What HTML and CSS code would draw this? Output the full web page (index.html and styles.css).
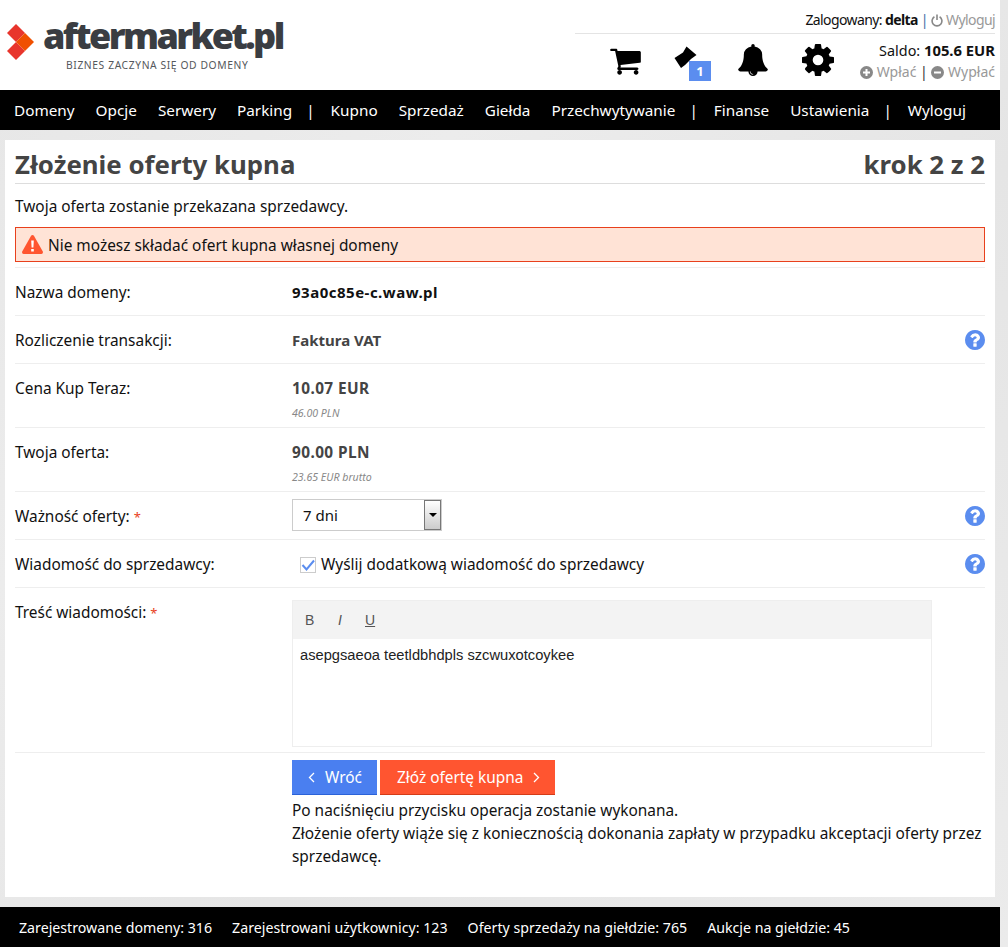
FILE: index.html
```html
<!DOCTYPE html>
<html lang="pl">
<head>
    <meta charset="UTF-8">
    <title>Złożenie oferty kupna</title>
    <link rel="stylesheet" href="styles.css">
</head>
<body>

<svg class="defs" width="0" height="0">
  <symbol id="ico-help" viewBox="128 128 1536 1536">
    <path fill="#5b8def" d="M1024 1376v-192q0-14-9-23t-23-9h-192q-14 0-23 9t-9 23v192q0 14 9 23t23 9h192q14 0 23-9t9-23zm256-672q0-88-55.500-163t-138.500-116-170-41q-243 0-371 213-15 24 8 42l132 100q7 6 19 6 16 0 25-12 53-68 86-92 34-24 86-24 48 0 85.500 26t37.500 59q0 38-20 61t-68 45q-63 28-115.500 86.500t-52.500 125.500v36q0 14 9 23t23 9h192q14 0 23-9t9-23q0-19 21.500-49.500t54.500-49.500q32-18 49-28.500t46-35 44.500-48 28-60.500 12.500-81zm384 192q0 209-103 385.500t-279.500 279.500-385.500 103-385.500-103-279.500-279.500-103-385.500 103-385.500 279.500-279.500 385.500-103 385.500 103 279.500 279.500 103 385.500z"/>
  </symbol>
</svg>

<header class="top">
  <div class="logo">
    <svg class="logo-mark" width="30" height="38" viewBox="0 0 30 38">
      <polygon points="1,10 10,1 19,10 10,19" fill="#e8352c"/>
      <polygon points="1,28 10,19 19,28 10,37" fill="#e8352c"/>
      <polygon points="10,19 19,10 28,19 19,28" fill="#f05000"/>
    </svg>
    <div class="logo-text">
      <div class="logo-name">aftermarket.pl</div>
      <div class="logo-sub">BIZNES ZACZYNA SIĘ OD DOMENY</div>
    </div>
  </div>
  <div class="user">
    <div class="user-line">Zalogowany: <b>delta</b> <span class="sep">|</span>
      <svg class="mini" width="12" height="13" viewBox="0 0 12 13"><path d="M3.400 2.800a4.900 4.900 0 1 0 5.200 0M6 .6v5.400" fill="none" stroke="#888" stroke-width="1.600"/></svg>
      <a class="muted">Wyloguj</a></div>
    <div class="user-tools">
      <svg class="tool tool-cart" width="33" height="29" viewBox="0 128 1792 1536">
        <path fill="#000" d="M704 1536q0 52-38 90t-90 38-90-38-38-90 38-90 90-38 90 38 38 90zm896 0q0 52-38 90t-90 38-90-38-38-90 38-90 90-38 90 38 38 90zm128-1088v512q0 24-16.500 42.500t-40.500 21.500l-1044 122q13 60 13 70 0 16-24 64h920q26 0 45 19t19 45-19 45-45 19h-1024q-26 0-45-19t-19-45q0-11 8-31.500t16-36 21.500-40 15.500-29.500l-177-823h-204q-26 0-45-19t-19-45 19-45 45-19h256q16 0 28.500 6.500t19.500 15.500 13 24.500 8 26 5.500 29.500 4.500 26h1201q26 0 45 19t19 45z"/>
      </svg>
      <div class="tool tool-pin">
        <svg width="24" height="24" viewBox="0 0 24 24">
          <path fill="#000" d="M.5 13L9 7.500 12.500 1.500 22.500 10 17 14 11 20 7 23z"/>
        </svg>
        <span class="pin-badge">1</span>
      </div>
      <svg class="tool tool-bell" width="32" height="32" viewBox="0 0 1792 1792">
        <path fill="#000" d="M912 1696q0-16-16-16-59 0-101.500-42.500t-42.500-101.500q0-16-16-16t-16 16q0 73 51.500 124.500t124.500 51.500q16 0 16-16zm816-288q0 52-38 90t-90 38h-448q0 106-75 181t-181 75-181-75-75-181h-448q-52 0-90-38t-38-90q50-42 91-88t85-119.500 74.500-158.500 50-206 19.500-260q0-152 117-282.500t307-158.500q-8-19-8-39 0-40 28-68t68-28 68 28 28 68q0 20-8 39 190 28 307 158.500t117 282.500q0 139 19.500 260t50 206 74.500 158.500 85 119.500 91 88z"/>
      </svg>
      <svg class="tool tool-gear" width="32" height="32" viewBox="128 128 1536 1536">
        <path fill="#000" d="M1152 896q0-106-75-181t-181-75-181 75-75 181 75 181 181 75 181-75 75-181zm512-109v222q0 12-8 23t-20 13l-185 28q-19 54-39 91 35 50 107 138 10 12 10 25t-9 23q-27 37-99 108t-94 71q-12 0-26-9l-138-108q-44 23-91 38-16 136-29 186-7 28-36 28h-222q-14 0-24.500-8.500t-11.500-21.500l-28-184q-49-16-90-37l-141 107q-10 9-25 9-14 0-25-11-126-114-165-168-7-10-7-23 0-12 8-23 15-21 51-66.500t54-70.500q-27-50-41-99l-183-27q-13-2-21-12.500t-8-23.500v-222q0-12 8-23t19-13l186-28q14-46 39-92-40-57-107-138-10-12-10-24 0-10 9-23 26-36 98.500-107.500t94.500-71.500q13 0 26 10l138 107q44-23 91-38 16-136 29-186 7-28 36-28h222q14 0 24.500 8.500t11.500 21.500l28 184q49 16 90 37l142-107q9-9 24-9 13 0 25 10 129 119 165 170 7 8 7 22 0 12-8 23-15 21-51 66.500t-54 70.500q26 50 41 98l183 28q13 2 21 12.500t8 23.500z"/>
      </svg>
      <div class="saldo">
        <div class="saldo-line">Saldo: <b>105.6 EUR</b></div>
        <div class="saldo-links">
          <svg class="mini" width="13" height="13" viewBox="0 0 13 13"><circle cx="6.500" cy="6.500" r="6.500" fill="#888"/><path d="M6.500 3v7M3 6.500h7" stroke="#fff" stroke-width="2"/></svg>
          <a class="muted">Wpłać</a> <span class="sep-dark">|</span>
          <svg class="mini" width="13" height="13" viewBox="0 0 13 13"><circle cx="6.500" cy="6.500" r="6.500" fill="#888"/><path d="M3 6.500h7" stroke="#fff" stroke-width="2"/></svg>
          <a class="muted">Wypłać</a>
        </div>
      </div>
    </div>
  </div>
</header>

<nav class="menu">
  <a>Domeny</a><a>Opcje</a><a>Serwery</a><a>Parking</a><span class="bar">|</span>
  <a>Kupno</a><a>Sprzedaż</a><a>Giełda</a><a>Przechwytywanie</a><span class="bar">|</span>
  <a>Finanse</a><a>Ustawienia</a><span class="bar">|</span><a>Wyloguj</a>
</nav>

<main class="card">
  <div class="title-row">
    <h1>Złożenie oferty kupna</h1>
    <div class="step">krok 2 z 2</div>
  </div>
  <p class="intro">Twoja oferta zostanie przekazana sprzedawcy.</p>
  <div class="alert">
    <svg width="21" height="19" viewBox="0 0 21 19">
      <path d="M10.500 0c.6 0 1.100.3 1.400.8l8.900 15.800c.5 1-.2 2.400-1.400 2.400H1.600C.4 19-.3 17.600.2 16.600L9.100.8c.3-.5.8-.8 1.400-.8z" fill="#ff5530"/>
      <path d="M9.200 5.500h2.600l-.4 7h-1.800zM9.200 14h2.600v2.500H9.200z" fill="#fff"/>
    </svg>
    <span class="alert-text">Nie możesz składać ofert kupna własnej domeny</span>
  </div>

  <div class="row row-first">
    <div class="label">Nazwa domeny:</div>
    <div class="value"><b class="domain">93a0c85e-c.waw.pl</b></div>
  </div>
  <div class="row">
    <div class="label">Rozliczenie transakcji:</div>
    <div class="value"><b class="plain">Faktura VAT</b></div>
    <svg class="help" width="20" height="20"><use href="#ico-help"/></svg>
  </div>
  <div class="row row-tall">
    <div class="label">Cena Kup Teraz:</div>
    <div class="value"><b>10.07 EUR</b><small>46.00 PLN</small></div>
  </div>
  <div class="row row-tall">
    <div class="label">Twoja oferta:</div>
    <div class="value"><b>90.00 PLN</b><small>23.65 EUR brutto</small></div>
  </div>
  <div class="row">
    <div class="label">Ważność oferty: <i class="req">*</i></div>
    <div class="value">
      <div class="select">7 dni<span class="select-btn"></span></div>
    </div>
    <svg class="help" width="20" height="20"><use href="#ico-help"/></svg>
  </div>
  <div class="row">
    <div class="label">Wiadomość do sprzedawcy:</div>
    <div class="value check-line">
      <svg class="check" width="16" height="16" viewBox="0 0 16 16">
        <rect x=".5" y=".5" width="15" height="15" fill="#fff" stroke="#ccc"/>
        <path d="M2.500 8l4 4.500 7.500-9" fill="none" stroke="#5b8def" stroke-width="2"/>
      </svg>
      Wyślij dodatkową wiadomość do sprzedawcy
    </div>
    <svg class="help" width="20" height="20"><use href="#ico-help"/></svg>
  </div>
  <div class="row row-editor">
    <div class="label">Treść wiadomości: <i class="req">*</i></div>
    <div class="editor">
      <div class="editor-bar"><span>B</span><span class="it">I</span><span class="un">U</span></div>
      <div class="editor-body">asepgsaeoa teetldbhdpls szcwuxotcoykee</div>
    </div>
  </div>
  <div class="actions">
    <div class="buttons">
      <a class="btn btn-back"><svg width="7" height="11" viewBox="0 0 7 11"><path d="M6 1L1.500 5.500 6 10" fill="none" stroke="#fff" stroke-width="1.300"/></svg>Wróć</a>
      <a class="btn btn-go">Złóż ofertę kupna<svg width="7" height="11" viewBox="0 0 7 11"><path d="M1 1l4.500 4.500L1 10" fill="none" stroke="#fff" stroke-width="1.300"/></svg></a>
    </div>
    <p>Po naciśnięciu przycisku operacja zostanie wykonana.<br>Złożenie oferty wiąże się z koniecznością dokonania zapłaty w przypadku akceptacji oferty przez sprzedawcę.</p>
  </div>
</main>

<footer class="foot">
  <span>Zarejestrowane domeny: 316</span>
  <span>Zarejestrowani użytkownicy: 123</span>
  <span>Oferty sprzedaży na giełdzie: 765</span>
  <span>Aukcje na giełdzie: 45</span>
</footer>

</body>
</html>
```

FILE: styles.css
```css
/* Global styles */

* {
  box-sizing: border-box;
  margin: 0;
  padding: 0;
}

body {
  font-family: "Noto Sans", Arial, sans-serif;
  font-size: 15.400px;
  color: #111;
  background-color: #e9e9e9;
  background-image: linear-gradient(135deg, #e6e6e6, #ececec 30%, #e5e5e5 60%, #ebebeb);
  width: 1008px;
  height: 947px;
  overflow: hidden;
  display: flex;
  flex-direction: column;
}

.defs {
  position: absolute;
}

/* Header */

.top {
  height: 90px;
  width: 1000px;
  flex: none;
  background-color: #fff;
  display: flex;
  justify-content: space-between;
}

.logo {
  display: flex;
  padding: 16px 0 0 6px;
  gap: 7px;
}

.logo-mark {
  margin-top: 7px;
}

.logo-name {
  font-family: "Open Sans", sans-serif;
  font-weight: 800;
  font-size: 36px;
  line-height: 40px;
  letter-spacing: -2.600px;
  color: #3a3d42;
}

.logo-sub {
  font-size: 10.300px;
  line-height: 14px;
  letter-spacing: .6px;
  color: #55585c;
  margin-left: 23px;
  margin-top: 2px;
  white-space: nowrap;
}

.user {
  width: 425px;
  text-align: right;
  padding-right: 5px;
}

.user-line {
  height: 34px;
  padding-top: 10px;
  font-size: 14px;
  line-height: 20px;
  letter-spacing: -.6px;
  border-bottom: 1px solid #e4e4e4;
}

.sep {
  color: #3a6ea5;
}

.sep-dark {
  color: #333;
}

.muted {
  color: #999;
}

.mini {
  vertical-align: -2px;
}

.user-tools {
  display: flex;
  text-align: left;
  padding: 10px 0 0 34px;
  align-items: flex-start;
}

.tool {
  flex: none;
}

.tool-cart {
  margin-top: 2px;
}

.tool-pin {
  position: relative;
  width: 40px;
  margin-left: 32px;
  margin-top: 1px;
  height: 40px;
}

.pin-badge {
  position: absolute;
  left: 15px;
  top: 16px;
  width: 22px;
  height: 20px;
  background-color: #5b8def;
  color: #fff;
  font-size: 13px;
  font-weight: 700;
  line-height: 20px;
  text-align: center;
}

.tool-bell {
  margin-left: 23px;
}

.tool-gear {
  margin-left: 33px;
}

.saldo {
  margin-left: auto;
  text-align: right;
  font-size: 14.400px;
  line-height: 21px;
  margin-top: -4px;
}

.saldo-line b {
  font-size: 14.800px;
}

.saldo-links {
  white-space: nowrap;
  font-size: 14px;
}

/* Menu */

.menu {
  height: 40px;
  width: 1000px;
  flex: none;
  background-color: #000;
  color: #fff;
  font-size: 15.300px;
  display: flex;
  align-items: center;
  padding-left: 14px;
}

.menu a {
  margin-right: 21px;
}

.bar {
  margin: 0 16px 0 -7px;
}

/* Card */

.card {
  width: 990px;
  height: 757px;
  flex: none;
  margin: 10px 0 10px 5px;
  background-color: #fff;
  padding: 0 10px;
}

.title-row {
  display: flex;
  justify-content: space-between;
  align-items: center;
  height: 44px;
  padding-top: 5px;
  border-bottom: 1px solid #ddd;
  color: #444;
  font-size: 25.800px;
  font-weight: 700;
}

h1 {
  font-size: 25.800px;
}

.intro {
  height: 43px;
  line-height: 46px;
}

.alert {
  height: 35px;
  border: 1px solid #e8401c;
  background-color: #ffe3d6;
  display: flex;
  align-items: center;
  gap: 5px;
  padding-left: 6px;
}

.alert-text {
  padding-top: 2px;
}

.row {
  position: relative;
  display: flex;
  height: 48px;
  border-bottom: 1px solid #eee;
  padding-top: 15px;
  line-height: 20px;
}

.row-first {
  margin-top: 5px;
  border-top: 1px solid #eee;
  height: 49px;
}

.row-tall {
  height: 64px;
}

.label {
  width: 277px;
  flex: none;
}

.req {
  color: #e8401c;
  font-style: normal;
  font-size: 13px;
}

.value b {
  color: #444;
  letter-spacing: .4px;
}

.value b.plain {
  font-size: 15px;
  letter-spacing: 0;
  position: relative;
  top: -1px;
}

.value b.domain {
  color: #111;
  font-size: 15px;
  letter-spacing: .5px;
  position: relative;
  top: -1px;
}

.value small {
  display: block;
  font-size: 10.600px;
  font-style: italic;
  color: #888;
  line-height: 14px;
  margin-top: 7px;
}

.help {
  position: absolute;
  right: 0;
  top: 14px;
}

.select {
  position: relative;
  width: 150px;
  height: 32px;
  margin-top: -8px;
  border: 1px solid #ccc;
  padding-left: 10px;
  line-height: 30px;
  font-size: 15px;
}

.select-btn {
  position: absolute;
  right: 0;
  top: 0;
  width: 17px;
  height: 30px;
  border: 1px solid #777;
  background: linear-gradient(#fff, #ccc);
}

.select-btn::after {
  content: "";
  position: absolute;
  left: 4px;
  top: 12px;
  border: 4px solid transparent;
  border-top: 4px solid #000;
}

.check-line {
  display: flex;
  align-items: center;
  gap: 5px;
  padding-left: 8px;
  height: 20px;
}

.row-editor {
  height: 165px;
  padding-top: 12px;
}

.row-editor .label {
  padding-top: 3px;
}

.editor {
  width: 640px;
  height: 147px;
  border: 1px solid #eee;
}

.editor-bar {
  height: 38px;
  background-color: #f3f3f3;
  font-family: "Liberation Sans", sans-serif;
  font-size: 14px;
  color: #555;
  display: flex;
  align-items: center;
  padding-left: 12px;
}

.editor-bar span {
  width: 30px;
}

.editor-bar .it {
  font-style: italic;
  padding-left: 3px;
}

.editor-bar .un {
  text-decoration: underline;
}

.editor-body {
  font-family: "Liberation Sans", sans-serif;
  font-size: 14.700px;
  padding: 6px 7px;
  color: #222;
}

.actions {
  padding: 7px 0 0 277px;
}

.buttons {
  display: flex;
  gap: 3px;
}

.btn {
  height: 35px;
  display: flex;
  align-items: center;
  color: #fff;
  gap: 10px;
}

.btn-back {
  width: 85px;
  padding-left: 16px;
  background-color: #4a7ff0;
  border-bottom: 1px solid #2b62d8;
}

.btn-go {
  width: 175px;
  padding-left: 17px;
  background-color: #ff5530;
  border-bottom: 1px solid #d43c18;
}

.actions p {
  line-height: 23px;
  margin-top: 4px;
}

/* Footer */

.foot {
  height: 40px;
  width: 1000px;
  flex: none;
  background-color: #000;
  color: #fff;
  font-size: 14.200px;
  display: flex;
  align-items: center;
  gap: 20px;
  padding-left: 19px;
}
```
